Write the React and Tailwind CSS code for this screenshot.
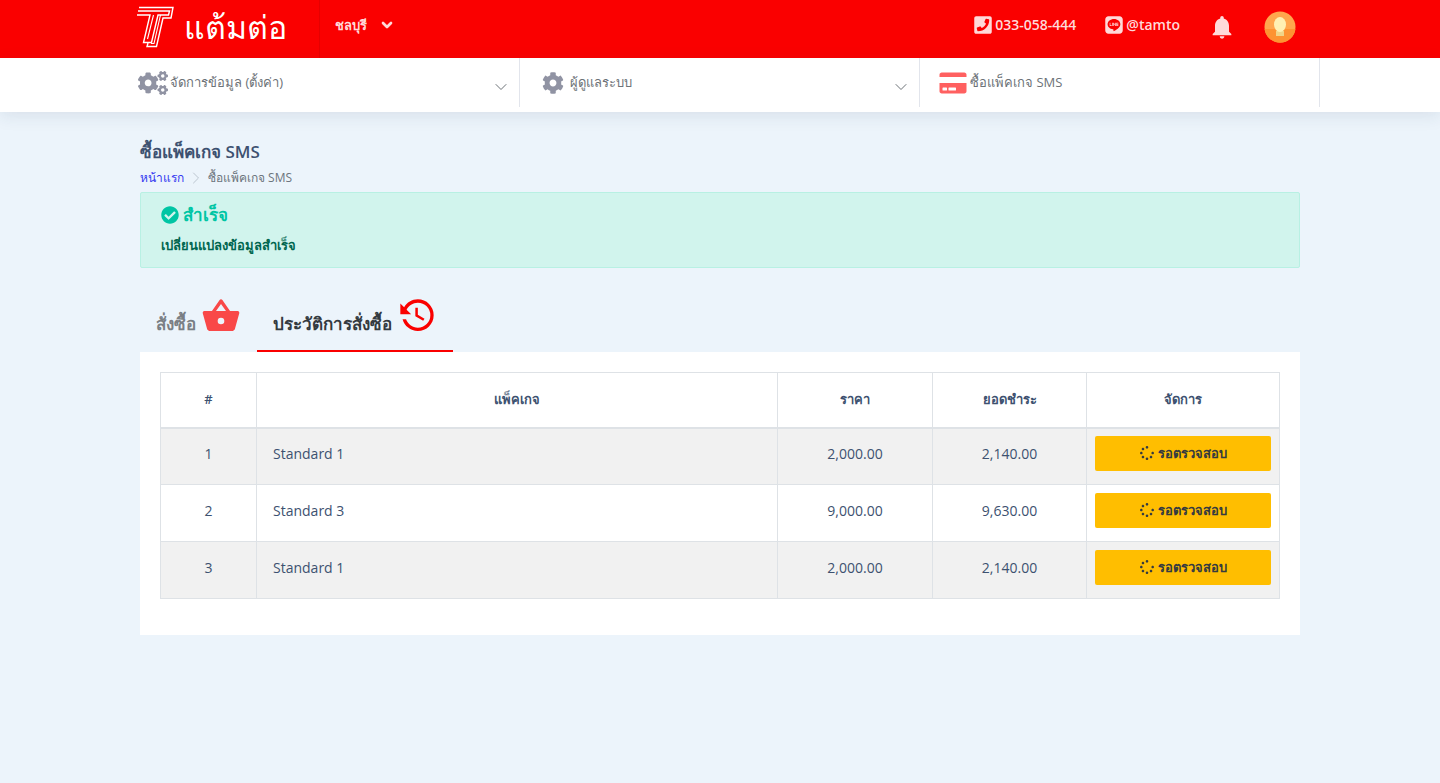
import React, { useState } from 'react';
import { FaPhoneSquare, FaLine, FaCogs, FaCog, FaCreditCard, FaCheckCircle, FaSpinner } from 'react-icons/fa';
import { MdNotifications } from 'react-icons/md';
import { FiChevronDown, FiChevronRight } from 'react-icons/fi';

const branches = ['ชลบุรี'];

const menus = [
  { label: 'จัดการข้อมูล (ตั้งค่า)', icon: <FaCogs className="w-[30px] h-6 text-[#9093a3]" />, hasSub: true },
  { label: 'ผู้ดูแลระบบ', icon: <FaCog className="w-[30px] h-[22px] text-[#9093a3]" />, hasSub: true },
  { label: 'ซื้อแพ็คเกจ SMS', icon: <FaCreditCard className="w-[30px] h-6 text-[#ff6060]" />, hasSub: false },
];

const orders = [
  { name: 'Standard 1', price: '2,000.00', total: '2,140.00' },
  { name: 'Standard 3', price: '9,000.00', total: '9,630.00' },
  { name: 'Standard 1', price: '2,000.00', total: '2,140.00' },
];

function Logo() {
  return (
    <svg width="40" height="42" viewBox="0 0 40 42" fill="none" stroke="white" strokeWidth="1.4" aria-hidden="true">
      <path d="M3 1.5H37L35 12H27L20.5 40.5H11L12 37" />
      <path d="M1 9H14L7.500 36.500H15.500L22 9H32.500L33.500 5H2" />
      <path d="M17.500 9L11.500 33M24.500 9L18 37.500H15" strokeWidth="1.1" />
    </svg>
  );
}

function HistoryIcon({ className }) {
  return (
    <svg viewBox="0 0 24 24" fill="currentColor" className={className} aria-hidden="true">
      <path d="M11,7V12.11L15.71,14.9L16.5,13.62L12.5,11.25V7M12.5,2C8.97,2 5.91,3.92 4.27,6.77L2,4.5V11H8.5L5.75,8.25C6.96,5.73 9.5,4 12.5,4A7.5,7.5 0 0,1 20,11.5A7.5,7.5 0 0,1 12.5,19C9.23,19 6.47,16.91 5.44,14H3.34C4.44,18.03 8.11,21 12.5,21C17.74,21 22,16.75 22,11.5A9.5,9.5 0 0,0 12.5,2Z" />
    </svg>
  );
}

function BasketIcon({ className }) {
  return (
    <svg viewBox="0 0 24 24" fill="currentColor" className={className} aria-hidden="true">
      <path d="M5.5,21C4.72,21 4.04,20.55 3.71,19.9V19.9L1.1,10.44L1,10A1,1 0 0,1 2,9H6.58L11.18,2.43C11.36,2.17 11.66,2 12,2C12.34,2 12.65,2.17 12.83,2.44L17.42,9H22A1,1 0 0,1 23,10L22.96,10.29L20.29,19.9C19.96,20.55 19.28,21 18.5,21H5.5M12,4.74L9,9H15L12,4.74M12,13A2,2 0 0,0 10,15A2,2 0 0,0 12,17A2,2 0 0,0 14,15A2,2 0 0,0 12,13Z" />
    </svg>
  );
}

function Avatar() {
  return (
    <svg width="32" height="32" viewBox="0 0 32 32" aria-hidden="true">
      <circle cx="16" cy="16" r="15.5" fill="#ffa64d" />
      <path d="M.6 18H31.4A15.5 15.5 0 0 1 .6 18Z" fill="#fd9332" />
      <path d="M12 20H20V25H12Z" fill="#f0d589" />
      <ellipse cx="16" cy="13.5" rx="6" ry="7.5" fill="#fff0b3" />
    </svg>
  );
}

function Header() {
  return (
    <header className="bg-[#fa0000] text-[#ffd9d9]">
      <div className="max-w-[1200px] mx-auto h-[58px] flex">
        <div className="w-[200px] pl-4 pb-1 flex items-center gap-2 border-r border-[#e60000] text-white">
          <Logo />
          <span className="text-[32px]">แต้มต่อ</span>
        </div>
        <div className="flex-1 pl-[15px] pr-6 pb-2 flex items-center">
          <div className="flex items-center text-[13px] font-semibold">
            <select aria-label="สาขา" className="appearance-none bg-transparent outline-none">
              {branches.map((b) => <option key={b}>{b}</option>)}
            </select>
            <FiChevronDown strokeWidth="4" className="ml-3 size-4" />
          </div>
          <div className="ml-auto flex items-center font-semibold">
            <a href="tel:033058444" className="flex items-center gap-0.5">
              <FaPhoneSquare className="size-5" />033-058-444
            </a>
            <a href="#line" className="flex items-center gap-0.5 ml-7">
              <FaLine className="size-5" />@tamto
            </a>
            <button type="button" aria-label="แจ้งเตือน" className="ml-7 mt-1">
              <MdNotifications className="size-7" />
            </button>
            <button type="button" aria-label="บัญชีผู้ใช้" className="ml-7 mt-1">
              <Avatar />
            </button>
          </div>
        </div>
      </div>
    </header>
  );
}

function Menu() {
  return (
    <nav className="bg-white shadow-[0_4px_16px_rgba(40,60,90,0.1)]">
      <div className="max-w-[1200px] mx-auto h-[54px] pb-[5px] grid grid-cols-3">
        {menus.map((m) => (
          <a key={m.label} href="#menu" className="flex items-center gap-0.5 pl-[18px] pr-2 border-r border-[#e2e5ec] text-[13px] text-[#6c7277]">
            {m.icon}
            {m.label}
            {m.hasSub && <FiChevronDown strokeWidth="1.2" className="ml-auto mt-2 size-5" />}
          </a>
        ))}
      </div>
    </nav>
  );
}

export default function App() {
  const [tab, setTab] = useState('history');

  const cell = 'border border-[#dee2e6]';
  const headCell = 'border border-b-2 border-[#dee2e6] text-[13px] font-semibold';
  const tabClasses = 'h-14 px-4 flex items-start gap-[5px] border-b-2 text-[17px] font-semibold cursor-pointer';

  return (
    <div className="min-h-screen bg-[#ecf4fb] text-sm text-[#3d5170] font-['Open_Sans','Noto_Sans',sans-serif]">
      <Header />
      <Menu />

      <main className="max-w-[1200px] mx-auto px-5 pt-6">
        <h1 className="text-[17px] leading-8 font-semibold">ซื้อแพ็คเกจ SMS</h1>
        <div className="h-6 flex items-center gap-0.5 text-xs pb-1">
          <a href="#home" className="font-medium text-[#3338f0]">หน้าแรก</a>
          <FiChevronRight strokeWidth="1.2" className="size-5 text-[#bcc6d0]" />
          <span className="text-[#6c757d]">ซื้อแพ็คเกจ SMS</span>
        </div>

        <div role="alert" className="h-19 px-5 pt-2 rounded-xs border border-[#b8f0e3] bg-[#d1f4ed] text-[#00664f]">
          <p className="flex items-center gap-1 text-[17px] leading-7 font-semibold text-[#00c5a4]">
            <FaCheckCircle className="size-[18px]" />สำเร็จ
          </p>
          <p className="text-[13px] leading-8 font-semibold">เปลี่ยนแปลงข้อมูลสำเร็จ</p>
        </div>

        <div role="tablist" className="flex mt-7">
          <button
            type="button"
            role="tab"
            aria-selected={tab === 'order'}
            onClick={() => setTab('order')}
            className={`${tabClasses} ${tab === 'order' ? 'border-[#fa0000] text-[#343a40]' : 'border-transparent text-[#7a7f84]'}`}
          >
            <span className="pt-4">สั่งซื้อ</span>
            <BasketIcon className="size-10 text-[#f94848]" />
          </button>
          <button
            type="button"
            role="tab"
            aria-selected={tab === 'history'}
            onClick={() => setTab('history')}
            className={`${tabClasses} ${tab === 'history' ? 'border-[#fa0000] text-[#343a40]' : 'border-transparent text-[#7a7f84]'}`}
          >
            <span className="pt-4">ประวัติการสั่งซื้อ</span>
            <HistoryIcon className="size-10 text-[#fa0000]" />
          </button>
        </div>

        <section className="bg-white px-5 pt-5 pb-9">
          <table className="w-full table-fixed border-collapse text-center">
            <colgroup>
              <col className="w-24" />
              <col />
              <col className="w-[155px]" />
              <col className="w-[154px]" />
              <col className="w-[193px]" />
            </colgroup>
            <thead>
              <tr className="h-[55px]">
                <th className={headCell}>#</th>
                <th className={headCell}>แพ็คเกจ</th>
                <th className={headCell}>ราคา</th>
                <th className={headCell}>ยอดชำระ</th>
                <th className={headCell}>จัดการ</th>
              </tr>
            </thead>
            <tbody>
              {orders.map((o, i) => (
                <tr key={i} className="h-[57px] odd:bg-[#f1f1f1]">
                  <td className={`${cell} pb-1`}>{i + 1}</td>
                  <td className={`${cell} pb-1 pl-4 text-left`}>{o.name}</td>
                  <td className={`${cell} pb-1`}>{o.price}</td>
                  <td className={`${cell} pb-1`}>{o.total}</td>
                  <td className={`${cell} px-2 pb-1.5`}>
                    <button type="button" className="w-full h-[35px] flex items-center justify-center gap-1 rounded-xs bg-[#ffbe00] text-[13px] font-semibold text-[#343a40]">
                      <FaSpinner className="size-[14px]" />รอตรวจสอบ
                    </button>
                  </td>
                </tr>
              ))}
            </tbody>
          </table>
        </section>
      </main>
    </div>
  );
}
